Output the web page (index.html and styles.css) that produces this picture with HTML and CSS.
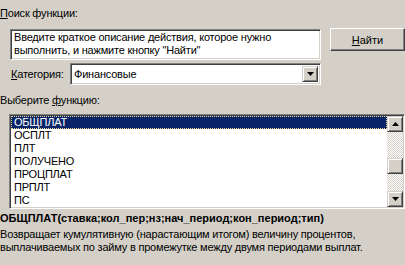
FILE: index.html
```html
<!DOCTYPE html>
<html lang="ru">
  <head>
    <meta charset="UTF-8" />
    <meta name="viewport" content="width=device-width, initial-scale=1.0" />
    <title>Мастер функций</title>
    <link rel="stylesheet" href="styles.css">
  </head>
  <body>
    <div class="dialog">
      <div class="caption"><u>П</u>оиск функции:</div>

      <div class="search-row">
        <div class="search-box">Введите краткое описание действия, которое нужно выполнить, и нажмите кнопку "Найти"</div>
        <button class="btn"><u>Н</u>айти</button>
      </div>

      <div class="category-row">
        <span class="category-label"><u>К</u>атегория:</span>
        <div class="combo">
          <span class="combo-value">Финансовые</span>
          <span class="combo-btn">
            <svg width="7" height="4" viewBox="0 0 7 4"><path d="M0 0h7L3.5 4z" fill="#000"/></svg>
          </span>
        </div>
      </div>

      <div class="caption list-caption">Выберите <u>ф</u>ункцию:</div>

      <div class="list">
        <ul class="list-items">
          <li class="selected">ОБЩПЛАТ</li>
          <li>ОСПЛТ</li>
          <li>ПЛТ</li>
          <li>ПОЛУЧЕНО</li>
          <li>ПРОЦПЛАТ</li>
          <li>ПРПЛТ</li>
          <li>ПС</li>
        </ul>
        <div class="scrollbar">
          <span class="scroll-btn">
            <svg width="7" height="4" viewBox="0 0 7 4"><path d="M3.5 0L7 4H0z" fill="#000"/></svg>
          </span>
          <div class="track track-top"></div>
          <span class="scroll-btn"></span>
          <div class="track"></div>
          <span class="scroll-btn">
            <svg width="7" height="4" viewBox="0 0 7 4"><path d="M0 0h7L3.5 4z" fill="#000"/></svg>
          </span>
        </div>
      </div>

      <div class="signature">ОБЩПЛАТ(ставка;кол_пер;нз;нач_период;кон_период;тип)</div>
      <div class="description">Возвращает кумулятивную (нарастающим итогом) величину процентов, выплачиваемых по займу в промежутке между двумя периодами выплат.</div>
    </div>
  </body>
</html>
```

FILE: styles.css
```css
* {
  margin: 0;
  padding: 0;
  box-sizing: border-box;
}
html {
  background-color: #d4d0c8;
}
body {
  font-family: "Liberation Sans", Arial, sans-serif;
  font-size: 11px;
  line-height: 14px;
  letter-spacing: -0.2px;
  color: #000;
}

.dialog {
  padding: 6px 0 0 0;
}

.caption {
  height: 14px;
}

.search-row {
  display: flex;
  align-items: flex-start;
  margin-top: 9px;
}
.search-box {
  margin-left: 10px;
  width: 311px;
  height: 31px;
  background: #fff;
  border-top: 1px solid #808080;
  border-left: 1px solid #808080;
  border-right: 1px solid #fff;
  border-bottom: 1px solid #fff;
  box-shadow: inset 1px 1px 0 #404040, inset -1px -1px 0 #d4d0c8;
  padding: 1px 0 0 3px;
  line-height: 13px;
}
.btn {
  margin-left: 9px;
  width: 75px;
  height: 23px;
  font: inherit;
  letter-spacing: 0;
  background: #d4d0c8;
  border-top: 1px solid #fff;
  border-left: 1px solid #fff;
  border-right: 1px solid #404040;
  border-bottom: 1px solid #404040;
  box-shadow: inset -1px -1px 0 #808080;
  margin-top: -1px;
}

.category-row {
  display: flex;
  align-items: center;
  margin-top: 3px;
}
.category-label {
  margin-left: 11px;
  width: 59px;
}
.combo {
  display: flex;
  align-items: center;
  width: 251px;
  height: 22px;
  background: #fff;
  border-top: 1px solid #808080;
  border-left: 1px solid #808080;
  border-right: 1px solid #fff;
  border-bottom: 1px solid #fff;
  box-shadow: inset 1px 1px 0 #404040, inset -1px -1px 0 #d4d0c8;
  padding: 0 2px 0 3px;
}
.combo-value {
  flex: 1;
}
.combo-btn {
  display: flex;
  align-items: center;
  justify-content: center;
  width: 16px;
  height: 16px;
  background: #d4d0c8;
  border-top: 1px solid #d4d0c8;
  border-left: 1px solid #d4d0c8;
  border-right: 1px solid #404040;
  border-bottom: 1px solid #404040;
  box-shadow: inset 1px 1px 0 #fff, inset -1px -1px 0 #808080;
}

.list-caption {
  margin-top: 8px;
}

.list {
  display: flex;
  margin: 7px 0 0 9px;
  width: 396px;
  height: 95px;
  background: #fff;
  border-top: 1px solid #808080;
  border-left: 1px solid #808080;
  border-right: 1px solid #fff;
  border-bottom: 1px solid #fff;
  box-shadow: inset 1px 1px 0 #404040, inset -1px -1px 0 #d4d0c8;
  padding: 1px;
}
.list-items {
  flex: 1;
  list-style: none;
}
.list-items li {
  height: 13px;
  line-height: 13px;
  padding-left: 2px;
  border: 1px dotted transparent;
  display: flex;
  align-items: center;
}
.list-items li.selected {
  background: #0a246a;
  color: #fff;
  border-color: #e8e0a0;
}

.scrollbar {
  display: flex;
  flex-direction: column;
  width: 16px;
}
.scroll-btn {
  display: flex;
  align-items: center;
  justify-content: center;
  height: 16px;
  flex-shrink: 0;
  background: #d4d0c8;
  border-top: 1px solid #d4d0c8;
  border-left: 1px solid #d4d0c8;
  border-right: 1px solid #404040;
  border-bottom: 1px solid #404040;
  box-shadow: inset 1px 1px 0 #fff, inset -1px -1px 0 #808080;
}
.track {
  flex: 1;
  background: repeating-conic-gradient(#d4d0c8 0 25%, #fff 0 50%) 0 0 / 2px 2px;
}
.track-top {
  flex: 0 0 26px;
}

.signature {
  margin-top: 2px;
  font-weight: bold;
  letter-spacing: 0;
  height: 15px;
}
.description {
  margin-top: 2px;
  line-height: 13px;
  width: 395px;
}
```
